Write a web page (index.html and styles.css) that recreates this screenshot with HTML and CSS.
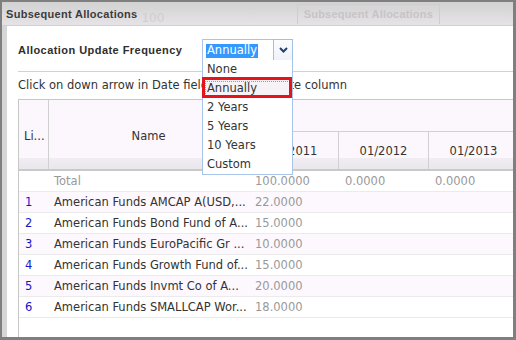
FILE: index.html
```html
<!DOCTYPE html>
<html lang="en">
<head>
    <meta charset="UTF-8">
    <title>Subsequent Allocations</title>
    <link rel="stylesheet" href="styles.css">
</head>
<body>

    <div class="window">
        <div class="titlebar">
            <span class="title">Subsequent Allocations</span>
            <span class="ghost-num">100</span>
            <span class="ghost-tab">Subsequent Allocations</span>
        </div>

        <div class="panel">
            <div class="freq">
                <label>Allocation Update Frequency</label>
                <div class="combo">
                    <div class="combo-field"><span class="sel">Annually</span></div>
                    <div class="combo-btn">
                        <svg width="9" height="6" viewBox="0 0 9 6"><path d="M1 1 L4.5 4.5 L8 1" fill="none" stroke="#23406f" stroke-width="2"/></svg>
                    </div>
                    <ul class="combo-list">
                        <li>None</li>
                        <li class="active">Annually</li>
                        <li>2 Years</li>
                        <li>5 Years</li>
                        <li>10 Years</li>
                        <li>Custom</li>
                    </ul>
                </div>
            </div>

            <p class="hint">Click on down arrow in Date field to edit the date column</p>

            <div class="grid">
                <div class="grid-head">
                    <div class="hcell h-li">Li...</div>
                    <div class="hcell h-name">Name</div>
                    <div class="hcell h-group"></div>
                    <div class="hcell h-date">01/2011</div>
                    <div class="hcell h-date">01/2012</div>
                    <div class="hcell h-date">01/2013</div>
                </div>

                <div class="row">
                    <div class="cell"></div>
                    <div class="cell total">Total</div>
                    <div class="cell num">100.0000</div>
                    <div class="cell num">0.0000</div>
                    <div class="cell num">0.0000</div>
                </div>
                <div class="row alt">
                    <div class="cell link">1</div>
                    <div class="cell">American Funds AMCAP A(USD,...</div>
                    <div class="cell num">22.0000</div>
                    <div class="cell num"></div>
                    <div class="cell num"></div>
                </div>
                <div class="row">
                    <div class="cell link">2</div>
                    <div class="cell">American Funds Bond Fund of A...</div>
                    <div class="cell num">15.0000</div>
                    <div class="cell num"></div>
                    <div class="cell num"></div>
                </div>
                <div class="row alt">
                    <div class="cell link">3</div>
                    <div class="cell">American Funds EuroPacific Gr ...</div>
                    <div class="cell num">10.0000</div>
                    <div class="cell num"></div>
                    <div class="cell num"></div>
                </div>
                <div class="row">
                    <div class="cell link">4</div>
                    <div class="cell">American Funds Growth Fund of...</div>
                    <div class="cell num">15.0000</div>
                    <div class="cell num"></div>
                    <div class="cell num"></div>
                </div>
                <div class="row alt">
                    <div class="cell link">5</div>
                    <div class="cell">American Funds Invmt Co of A...</div>
                    <div class="cell num">20.0000</div>
                    <div class="cell num"></div>
                    <div class="cell num"></div>
                </div>
                <div class="row">
                    <div class="cell link">6</div>
                    <div class="cell">American Funds SMALLCAP Wor...</div>
                    <div class="cell num">18.0000</div>
                    <div class="cell num"></div>
                    <div class="cell num"></div>
                </div>
            </div>
        </div>
    </div>

</body>
</html>
```

FILE: styles.css
```css
* {
    margin: 0;
    padding: 0;
    box-sizing: border-box;
}

body {
    font-family: "DejaVu Sans", Verdana, sans-serif;
    font-size: 11.5px;
    color: #333;
    background-color: #fff;
}

.window {
    width: 516px;
    height: 340px;
    display: flex;
    flex-direction: column;
    border-top: 2px solid #7f7f7f;
    border-left: 2px solid #7f7f7f;
    border-right: 3px solid #7f7f7f;
    border-bottom: 3px solid #7f7f7f;
    background-color: #d6d6d6;
    overflow: hidden;
}

/* title bar */
.titlebar {
    height: 24px;
    flex: none;
    display: flex;
    align-items: center;
    padding-left: 4px;
    background: linear-gradient(to bottom, #d2d2d2, #e6e3e6);
    border-bottom: 1px solid #d3d0d3;
}

.titlebar .title {
    font-family: "Liberation Sans", Arial, sans-serif;
    font-weight: bold;
    font-size: 11px;
    color: #3c3c3c;
    letter-spacing: 0.3px;
}

.titlebar .ghost-num {
    margin-left: 4px;
    margin-top: 8px;
    color: #cfcfcf;
    font-size: 12px;
}

.titlebar .ghost-tab {
    margin-left: auto;
    margin-right: 73px;
    height: 20px;
    padding: 0 6px;
    line-height: 18px;
    border: 1px solid #d0cdd0;
    border-bottom: none;
    color: #c6c4c6;
    font-family: "Liberation Sans", Arial, sans-serif;
    font-weight: bold;
    font-size: 11px;
    letter-spacing: 0.2px;
}

/* panel */
.panel {
    flex: 1;
    margin-left: 5px;
    padding-left: 11px;
    background-color: #fff;
    display: flex;
    flex-direction: column;
    overflow: hidden;
}

.freq {
    display: flex;
    align-items: center;
    margin-top: 13px;
    height: 22px;
}

.freq label {
    width: 184px;
    font-family: "Liberation Sans", Arial, sans-serif;
    font-weight: bold;
    font-size: 11px;
    letter-spacing: 0.45px;
    color: #2e2e2e;
}

.combo {
    position: relative;
    width: 91px;
    height: 22px;
    display: flex;
}

.combo-field {
    flex: 1;
    padding: 3px 0 0 3px;
    border: 1px solid #aac3e6;
    border-right: none;
}

.combo-field .sel {
    display: inline-block;
    height: 14px;
    line-height: 13px;
    padding: 0 1px;
    background-color: #3399ff;
    color: #fff;
}

.combo-btn {
    width: 20px;
    display: flex;
    align-items: center;
    justify-content: center;
    border: 1px solid #a3bfe6;
    background: linear-gradient(to bottom, #fbfcfe, #eef3fa);
}

.combo-list {
    position: absolute;
    top: 21px;
    left: 0;
    width: 91px;
    list-style: none;
    background-color: #fff;
    border: 1px solid #a8c4ea;
    border-top: none;
}

.combo-list li {
    position: relative;
    height: 19px;
    line-height: 19px;
    padding-left: 4px;
}

.combo-list li.active {
    background-color: #f6f2f6;
    outline: 1px dotted #9a9a9a;
    outline-offset: -3px;
}

.combo-list li.active::after {
    content: "";
    position: absolute;
    top: -2px;
    left: -1px;
    right: 0;
    bottom: 0;
    border: 3px solid #e5141a;
}

.hint {
    margin-top: 10px;
    height: 28px;
    line-height: 27px;
    border-top: 1px solid #d2d2d2;
    white-space: nowrap;
}

/* grid */
.grid {
    flex: 1;
    width: 501px;
    border-top: 1px solid #c8c8c8;
    border-left: 1px solid #c8c8c8;
}

.grid-head {
    display: grid;
    grid-template-columns: 30px 200px 90px 90px 90px;
    grid-template-rows: 32px 37px;
    border-bottom: 2px solid #c9c9c9;
    background-color: #fcf7fc;
}

.hcell {
    display: flex;
    align-items: center;
    justify-content: center;
    border-right: 1px solid #d0d0d0;
    background: linear-gradient(to bottom, #fcf7fc 0, #fcf7fc 26px, #f1edf2 26px, #e9e6ec 100%);
}

.h-li,
.h-name {
    grid-row: 1 / 3;
    background: linear-gradient(to bottom, #fcf7fc 0, #fcf7fc 58px, #f1edf2 58px, #e9e6ec 100%);
    padding-top: 2px;
}

.h-li {
    justify-content: flex-start;
    padding-left: 5px;
}

.h-group {
    grid-column: 3 / 6;
    border-bottom: 1px solid #d0d0d0;
    background: #fcf7fc;
}

.row {
    display: grid;
    grid-template-columns: 30px 200px 90px 90px 90px;
    height: 21px;
    border-bottom: 1px solid #ebebeb;
}

.row.alt {
    background-color: #fdf8fd;
}

.cell {
    line-height: 20px;
    padding-left: 5px;
    white-space: nowrap;
    overflow: hidden;
}

.cell.link {
    padding-left: 6px;
    color: #1515c8;
}

.cell.total,
.cell.num {
    color: #999;
}

.cell.num {
    padding-left: 6px;
}
```
